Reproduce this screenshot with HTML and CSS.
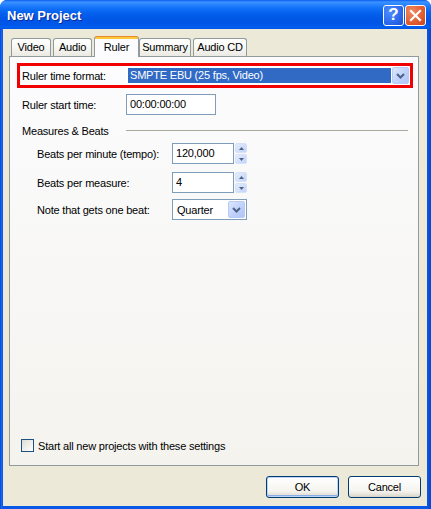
FILE: index.html
```html
<!DOCTYPE html>
<html>
<head>
<meta charset="utf-8">
<title>New Project</title>
<link rel="stylesheet" href="styles.css">
</head>
<body>
<div class="window">
  <div class="titlebar">
    <span class="title">New Project</span>
    <div class="caption">
      <div class="cap help">?</div>
      <div class="cap close">
        <svg width="13" height="13" viewBox="0 0 13 13"><path d="M2 2 L11 11 M11 2 L2 11" stroke="#fff" stroke-width="2.2" stroke-linecap="square"/></svg>
      </div>
    </div>
  </div>
  <div class="frame">
    <div class="client">
      <div class="tabs">
        <div class="tab t-video">Video</div>
        <div class="tab t-audio">Audio</div>
        <div class="tab t-ruler active">Ruler</div>
        <div class="tab t-summary">Summary</div>
        <div class="tab t-cd">Audio CD</div>
      </div>
      <div class="panel">
        <div class="highlight">
          <span class="hl-label">Ruler time format:</span>
          <div class="combo wide">
            <span class="sel">SMPTE EBU (25 fps, Video)</span>
            <span class="dd"><svg width="9" height="6" viewBox="0 0 9 6"><path d="M1 1 L4.5 4.5 L8 1" fill="none" stroke="#4D6185" stroke-width="2"/></svg></span>
          </div>
        </div>
        <div class="row start-row">
          <span class="lbl">Ruler start time:</span>
          <div class="edit time">00:00:00:00</div>
        </div>
        <div class="group-head">
          <span class="lbl">Measures &amp; Beats</span>
          <span class="rule"></span>
        </div>
        <div class="beats">
          <div class="brow r1">
            <span class="blbl">Beats per minute (tempo):</span>
            <div class="edit num">120,000</div>
            <div class="spin">
              <span class="sb up"><svg width="5" height="3" viewBox="0 0 5 3"><path d="M0 3 L2.5 0 L5 3Z" fill="#4D6185"/></svg></span>
              <span class="sb down"><svg width="5" height="3" viewBox="0 0 5 3"><path d="M0 0 L2.5 3 L5 0Z" fill="#4D6185"/></svg></span>
            </div>
          </div>
          <div class="brow r2">
            <span class="blbl">Beats per measure:</span>
            <div class="edit num">4</div>
            <div class="spin">
              <span class="sb up"><svg width="5" height="3" viewBox="0 0 5 3"><path d="M0 3 L2.5 0 L5 3Z" fill="#4D6185"/></svg></span>
              <span class="sb down"><svg width="5" height="3" viewBox="0 0 5 3"><path d="M0 0 L2.5 3 L5 0Z" fill="#4D6185"/></svg></span>
            </div>
          </div>
          <div class="brow r3">
            <span class="blbl">Note that gets one beat:</span>
            <div class="combo small">
              <span class="val">Quarter</span>
              <span class="dd"><svg width="9" height="6" viewBox="0 0 9 6"><path d="M1 1 L4.5 4.5 L8 1" fill="none" stroke="#4D6185" stroke-width="2"/></svg></span>
            </div>
          </div>
        </div>
        <div class="check-row">
          <span class="checkbox"></span>
          <span>Start all new projects with these settings</span>
        </div>
      </div>
      <div class="buttons">
        <div class="btn default">OK</div>
        <div class="btn">Cancel</div>
      </div>
    </div>
  </div>
</div>
</body>
</html>
```
FILE: styles.css
```css
* { box-sizing: border-box; }
html, body { margin: 0; padding: 0; }
body {
  width: 431px;
  height: 509px;
  overflow: hidden;
  font-family: "Liberation Sans", Arial, sans-serif;
  font-size: 11px;
  letter-spacing: -0.2px;
  color: #000;
  background: #ffffff;
}
.window {
  width: 431px;
  height: 509px;
  display: flex;
  flex-direction: column;
  background: #0A54E4;
  border-radius: 7px 7px 0 0;
  overflow: hidden;
}
.titlebar {
  height: 29px;
  flex: none;
  display: flex;
  align-items: center;
  padding: 0 5px 0 7px;
  background: linear-gradient(to bottom, #0A5DEF 0, #3D92FF 2px, #2C86FF 4px, #1272F8 8px, #0561EE 13px, #0055E5 20px, #0056E8 25px, #0060F2 27px, #0053E0 29px);
}
.title {
  flex: 1;
  color: #fff;
  font-weight: bold;
  font-size: 13px;
  letter-spacing: 0;
  text-shadow: 1px 1px 0 #0A2A9A;
  padding-top: 1px;
}
.caption { display: flex; gap: 1px; margin-top: 1px; }
.cap {
  width: 21px;
  height: 21px;
  border: 1px solid #fff;
  border-radius: 3px;
  display: flex;
  align-items: center;
  justify-content: center;
  color: #fff;
}
.help {
  background: radial-gradient(circle at 30% 30%, #4D8DFF, #2663E8 70%, #1A4FD0);
  font-weight: bold;
  font-size: 17px;
  letter-spacing: 0;
}
.close {
  background: radial-gradient(circle at 30% 30%, #F08A5F, #E0582E 65%, #C44420);
}
.frame {
  flex: 1;
  display: flex;
  padding: 0 4px 3px 3px;
  background: linear-gradient(to right, #0831D9 0, #166AEE 1px, #0A58E8 3px, #0A58E8 427px, #0848D0 430px);
}
.client {
  flex: 1;
  display: flex;
  flex-direction: column;
  background: #ECE9D8;
  padding: 7px 8px 8px 6px;
}
.tabs {
  display: flex;
  align-items: flex-end;
  height: 20px;
  padding-left: 2px;
  position: relative;
  z-index: 1;
}
.tab {
  height: 18px;
  margin-right: 2px;
  border: 1px solid #919B9C;
  border-bottom: none;
  border-radius: 3px 3px 0 0;
  background: linear-gradient(to bottom, #FFFFFF, #F7F7F4 50%, #EAE9E2);
  text-align: center;
  line-height: 17px;
}
.t-video { width: 40px; }
.t-audio { width: 39px; }
.t-ruler { width: 45px; }
.t-summary { width: 52px; }
.t-cd { width: 54px; }
.tab.active {
  height: 21px;
  margin-bottom: -1px;
  margin-right: 0;
  border-top-color: #E68B2C;
  background: linear-gradient(to bottom, #FFC73C 0, #FFC73C 2px, #FCFCFE 2px);
  line-height: 18px;
  padding-top: 1px;
}
.panel {
  flex: 1;
  display: flex;
  flex-direction: column;
  border: 1px solid #919B9C;
  background: linear-gradient(to bottom, #FCFCFE, #F4F3EE);
  padding: 6px 5px 13px 7px;
}
.highlight {
  height: 25px;
  border: 3px solid #F00000;
  display: flex;
  align-items: center;
}
.hl-label { width: 106px; padding-left: 2px; }
.combo {
  height: 19px;
  background: #fff;
  display: flex;
  align-items: center;
  position: relative;
}
.combo.wide {
  flex: 1;
  padding: 1px;
}
.combo .sel {
  flex: 1;
  height: 15px;
  margin: 0 1px;
  background: #316AC5;
  color: #fff;
  line-height: 15px;
  padding-left: 2px;
}
.dd {
  width: 17px;
  height: 17px;
  border: 1px solid #B8CBF6;
  border-radius: 2px;
  background: linear-gradient(135deg, #DCE6FD, #BDD0FA 60%, #AFC5F7);
  display: flex;
  align-items: center;
  justify-content: center;
}
.row {
  display: flex;
  align-items: center;
  padding-left: 5px;
}
.start-row { margin-top: 6px; }
.lbl { width: 104px; }
.edit {
  border: 1px solid #7F9DB9;
  background: #fff;
  height: 21px;
  line-height: 19px;
  padding-left: 3px;
}
.time { width: 90px; }
.group-head {
  display: flex;
  align-items: center;
  padding-left: 5px;
  margin-top: 9px;
  height: 13px;
}
.rule {
  flex: 1;
  height: 1px;
  background: #A8A89C;
  margin-right: 5px;
}
.beats { padding-left: 20px; }
.brow { display: flex; align-items: center; }
.r1 { margin-top: 6px; }
.r2 { margin-top: 8px; }
.r3 { margin-top: 6px; }
.blbl { width: 135px; }
.num { width: 62px; }
.spin {
  width: 12px;
  height: 21px;
  margin-left: 1px;
  display: flex;
  flex-direction: column;
  gap: 1px;
}
.sb {
  flex: 1;
  border: 1px solid #D7E2FA;
  border-radius: 2px;
  background: linear-gradient(135deg, #E4ECFD, #C3D4FA);
  display: flex;
  align-items: center;
  justify-content: center;
}
.combo.small {
  width: 75px;
  height: 21px;
  border: 1px solid #7F9DB9;
  padding: 1px;
}
.combo.small .val { flex: 1; padding-left: 3px; }
.check-row {
  margin-top: auto;
  display: flex;
  align-items: center;
  padding-left: 4px;
  gap: 4px;
}
.checkbox {
  width: 13px;
  height: 13px;
  border: 1px solid #1C5180;
  background: linear-gradient(135deg, #DCDCD7, #FFFFFF);
}
.buttons {
  display: flex;
  justify-content: flex-end;
  gap: 9px;
  margin-top: 10px;
  margin-right: -2px;
}
.btn {
  width: 73px;
  height: 22px;
  border: 1px solid #003C74;
  border-radius: 3px;
  background: linear-gradient(to bottom, #FFFFFF, #F5F4EF 70%, #E3E1D6 90%, #D6D0C5);
  display: flex;
  align-items: center;
  justify-content: center;
}
.btn.default {
  box-shadow: inset 0 0 0 1px #BCD4F6, inset 0 -1px 0 1px #89ADE4;
}
```
